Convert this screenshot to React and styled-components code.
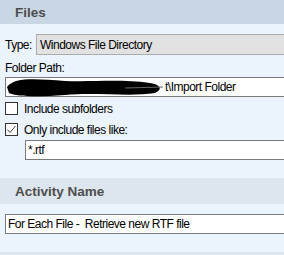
import React from 'react';
import styled, { createGlobalStyle } from 'styled-components';

const Global = createGlobalStyle`
  html, body {
    margin: 0;
    padding: 0;
    background: #ebf4fd;
    overflow: hidden;
  }
`;

const Panel = styled.div`
  width: 310px;
  font-family: "Liberation Sans", Arial, sans-serif;
  font-size: 12px;
  letter-spacing: -0.5px;
  color: #000;
`;

const SectionHeader = styled.div`
  height: ${p => p.$h}px;
  display: flex;
  align-items: center;
  padding-left: 15px;
  background: ${p => p.$bg};
  color: #4d4d4d;
  font-weight: bold;
  font-size: 13.5px;
  letter-spacing: 0;
`;

const SectionBody = styled.div`
  padding: ${p => p.$pad};
  display: flex;
  flex-direction: column;
`;

const Row = styled.div`
  display: flex;
  align-items: center;
  height: ${p => p.$h || 14}px;
  margin-top: ${p => p.$mt || 0}px;
  margin-left: ${p => p.$ml || 0}px;
`;

const Label = styled.span`
  line-height: 14px;
  width: ${p => (p.$w ? `${p.$w}px` : 'auto')};
  margin-left: ${p => p.$ml || 0}px;
  white-space: nowrap;
`;

const Select = styled.div`
  flex: 1;
  height: 19px;
  border: 1px solid #acacac;
  background: #e1e1e1;
  display: flex;
  align-items: center;
  padding-left: 3px;
`;

const TextBox = styled.div`
  position: relative;
  flex: 1;
  height: 18px;
  border: 1px solid #7a7a7a;
  background: #fff;
  display: flex;
  align-items: center;
  padding-left: ${p => p.$pl ?? 2}px;
`;

const Scribble = styled.svg`
  position: absolute;
  left: -1px;
  top: -2px;
`;

const Box = styled.span`
  width: 11px;
  height: 11px;
  border: 1px solid #333;
  background: #fff;
  display: flex;
  align-items: center;
  justify-content: center;
`;

function Check({ checked }) {
  return (
    <Box>
      {checked && (
        <svg width="11" height="11" viewBox="0 0 11 11">
          <path d="M1.5 5.5 L4 8.5 L9.5 2" fill="none" stroke="#444" strokeWidth="1" />
        </svg>
      )}
    </Box>
  );
}

export default function App() {
  return (
    <>
      <Global />
      <Panel>
        <SectionHeader $h={24} $bg="#c9d7e4">Files</SectionHeader>
        <SectionBody $pad="10px 0 18px 5px">
          <Row $h={21}>
            <Label $w={31}>Type:</Label>
            <Select>Windows File Directory</Select>
          </Row>
          <Row $mt={6}>
            <Label>Folder Path:</Label>
          </Row>
          <Row $h={20} $mt={2}>
            <TextBox $pl={0}>
              <Scribble width="175" height="22" viewBox="0 0 175 22">
                <path
                  d="M2 11 C 10 1, 30 3, 60 5 C 90 6, 115 3, 145 7 C 156 9, 158 13, 150 17 C 125 21, 90 16, 60 19 C 35 21, 12 21, 4 17 Z"
                  fill="#000"
                />
                <path d="M120 12 L158 11" stroke="#666" strokeWidth="1.2" />
              </Scribble>
              <Label $ml={159}>t\Import Folder</Label>
            </TextBox>
          </Row>
          <Row $h={13} $mt={5}>
            <Check />
            <Label $ml={6}>Include subfolders</Label>
          </Row>
          <Row $h={13} $mt={8}>
            <Check checked />
            <Label $ml={6}>Only include files like:</Label>
          </Row>
          <Row $h={20} $mt={4} $ml={20}>
            <TextBox>*.rtf</TextBox>
          </Row>
        </SectionBody>
        <SectionHeader $h={26} $bg="#dde5ee">Activity Name</SectionHeader>
        <SectionBody $pad="10px 0 18px 5px">
          <Row $h={20}>
            <TextBox>For Each File -&nbsp; Retrieve new RTF file</TextBox>
          </Row>
        </SectionBody>
        <SectionHeader $h={26} $bg="#dde5ee" />
      </Panel>
    </>
  );
}
